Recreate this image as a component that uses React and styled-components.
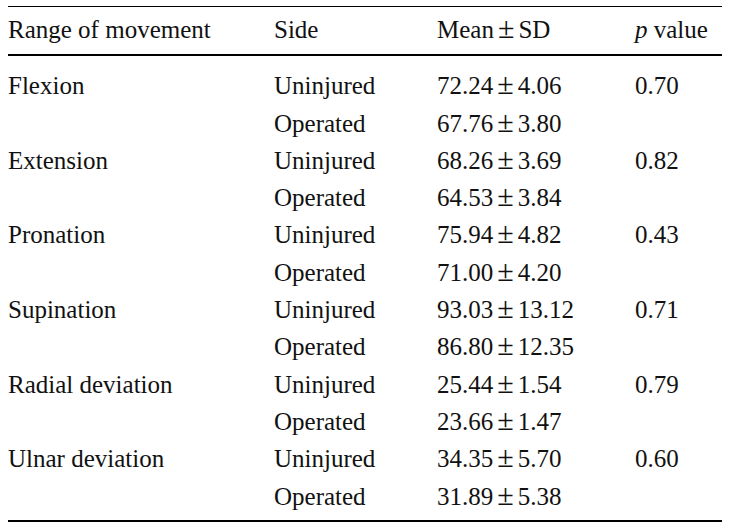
import React from "react";
import styled, { createGlobalStyle } from "styled-components";

// Data for the range of movement table
const rows = [
  { name: "Flexion", p: "0.70", uninjured: ["72.24", "4.06"], operated: ["67.76", "3.80"] },
  { name: "Extension", p: "0.82", uninjured: ["68.26", "3.69"], operated: ["64.53", "3.84"] },
  { name: "Pronation", p: "0.43", uninjured: ["75.94", "4.82"], operated: ["71.00", "4.20"] },
  { name: "Supination", p: "0.71", uninjured: ["93.03", "13.12"], operated: ["86.80", "12.35"] },
  { name: "Radial deviation", p: "0.79", uninjured: ["25.44", "1.54"], operated: ["23.66", "1.47"] },
  { name: "Ulnar deviation", p: "0.60", uninjured: ["34.35", "5.70"], operated: ["31.89", "5.38"] },
];

const GlobalStyle = createGlobalStyle`
  html, body {
    margin: 0;
    padding: 0;
    background: #fff;
  }
  body {
    font-family: "Liberation Serif", "Times New Roman", serif;
    color: #111;
  }
`;

// Mean ± SD pair
const MeanSd = ({ mean, sd }) => (
  <>
    {mean}
    <Pm>±</Pm>
    {sd}
  </>
);

const App = () => {
  return (
    <>
      <GlobalStyle />
      <Page>
        <Table>
          <colgroup>
            <col style={{ width: 266 }} />
            <col style={{ width: 163 }} />
            <col style={{ width: 198 }} />
            <col />
          </colgroup>
          <thead>
            <tr>
              <Th>Range of movement</Th>
              <Th>Side</Th>
              <Th>
                <MeanSd mean="Mean" sd="SD" />
              </Th>
              <Th>
                <Italic>p</Italic> value
              </Th>
            </tr>
          </thead>
          <tbody>
            {rows.map((r, i) => {
              const first = i === 0;
              const last = i === rows.length - 1;
              return (
                <React.Fragment key={r.name}>
                  <tr>
                    <Td $first={first}>{r.name}</Td>
                    <Td $first={first}>Uninjured</Td>
                    <Td $first={first}>
                      <MeanSd mean={r.uninjured[0]} sd={r.uninjured[1]} />
                    </Td>
                    <Td $first={first}>{r.p}</Td>
                  </tr>
                  <tr>
                    <Td $last={last}></Td>
                    <Td $last={last}>Operated</Td>
                    <Td $last={last}>
                      <MeanSd mean={r.operated[0]} sd={r.operated[1]} />
                    </Td>
                    <Td $last={last}></Td>
                  </tr>
                </React.Fragment>
              );
            })}
          </tbody>
        </Table>
      </Page>
    </>
  );
};

export default App;

const Page = styled.div`
  padding: 6px 10px 0 8px;
`;

const Table = styled.table`
  width: 714px;
  table-layout: fixed;
  border-collapse: separate;
  border-spacing: 0;
  font-size: 25px;
  line-height: 37.3px;
`;

const Th = styled.th`
  font-weight: normal;
  text-align: left;
  padding: 4px 0 6px 0;
  border-top: 1px solid #000;
  border-bottom: 2px solid #000;
  white-space: nowrap;
`;

const Td = styled.td`
  text-align: left;
  padding: ${(p) => (p.$first ? "11px" : "0")} 0 ${(p) => (p.$last ? "5px" : "0")} 0;
  border-bottom: ${(p) => (p.$last ? "2px solid #000" : "none")};
  white-space: nowrap;
  height: 37.3px;
`;

const Pm = styled.span`
  font-size: 30px;
  line-height: 0;
  margin: 0 4px;
`;

const Italic = styled.i`
  font-style: italic;
`;
